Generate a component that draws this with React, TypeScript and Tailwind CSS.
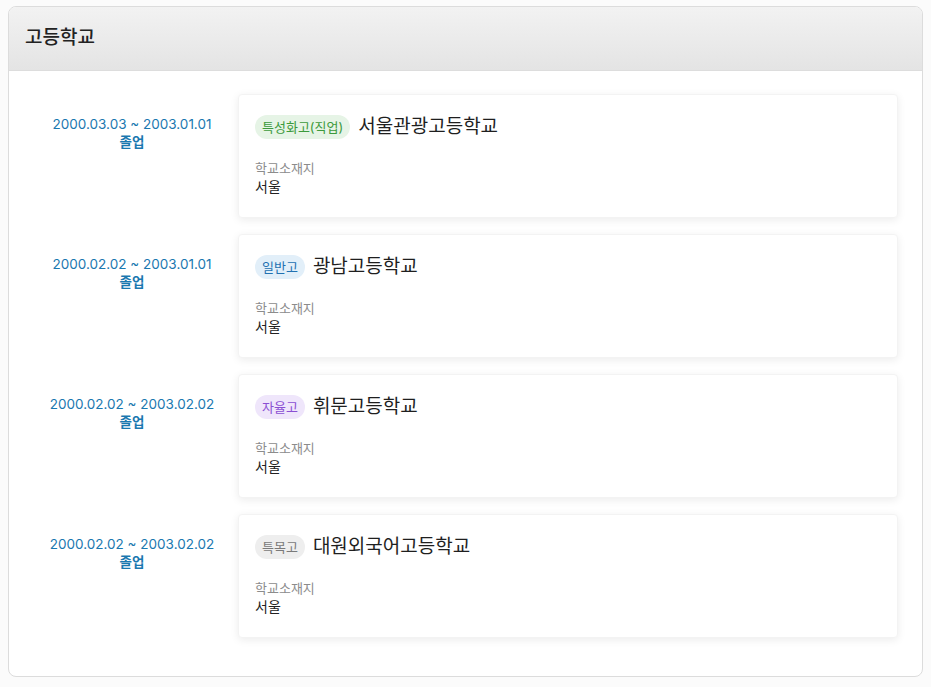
import React from "react";

type School = {
  period: string;
  status: string;
  kind: string;
  kindClass: string;
  name: string;
  location: string;
};

const SCHOOLS: School[] = [
  {
    period: "2000.03.03 ~ 2003.01.01",
    status: "졸업",
    kind: "특성화고(직업)",
    kindClass: "bg-[#e6f4e6] text-[#3c9a3c]",
    name: "서울관광고등학교",
    location: "서울",
  },
  {
    period: "2000.02.02 ~ 2003.01.01",
    status: "졸업",
    kind: "일반고",
    kindClass: "bg-[#e2eff9] text-[#2271b1]",
    name: "광남고등학교",
    location: "서울",
  },
  {
    period: "2000.02.02 ~ 2003.02.02",
    status: "졸업",
    kind: "자율고",
    kindClass: "bg-[#efe6fb] text-[#8b4fd3]",
    name: "휘문고등학교",
    location: "서울",
  },
  {
    period: "2000.02.02 ~ 2003.02.02",
    status: "졸업",
    kind: "특목고",
    kindClass: "bg-[#eeeeee] text-[#7a7a7a]",
    name: "대원외국어고등학교",
    location: "서울",
  },
];

const SchoolRow: React.FC<{ school: School }> = ({ school }) => {
  return (
    <div className="flex flex-row items-start gap-[7px]">
      <div className="flex w-[198px] shrink-0 flex-col items-center pt-[21px] text-[13.5px] leading-[18px] text-[#1a78b0]">
        <span>{school.period}</span>
        <span className="font-semibold">{school.status}</span>
      </div>
      <div className="flex flex-1 flex-col rounded-[4px] border border-[#f3f3f3] bg-white px-4 pb-5 pt-5 shadow-[0_2px_8px_rgba(0,0,0,0.08)]">
        <div className="flex flex-row items-center gap-2">
          <span
            className={`rounded-full px-[7px] text-[13px] leading-[24px] ${school.kindClass}`}
          >
            {school.kind}
          </span>
          <h3 className="text-[19px] leading-[24px] text-[#1f1f1f]">
            {school.name}
          </h3>
        </div>
        <div className="mt-5 flex flex-col">
          <span className="text-[13px] leading-[18px] text-[#8c8c8c]">
            학교소재지
          </span>
          <span className="text-[14px] leading-[20px] text-[#222]">
            {school.location}
          </span>
        </div>
      </div>
    </div>
  );
};

export default function App() {
  return (
    <div
      className="min-h-[687px] w-full bg-[#fbfbfb] px-2 pb-[10px] pt-[6px]"
      style={{ fontFamily: "Inter, 'Noto Sans CJK KR', sans-serif" }}
    >
      <div className="flex flex-col overflow-hidden rounded-[8px] border border-[#dcdcdc] bg-white">
        <div className="flex h-[64px] items-center border-b border-[#dddddd] bg-gradient-to-b from-[#f2f2f2] to-[#e4e4e4] px-4">
          <h2 className="text-[19px] font-medium text-[#222]">고등학교</h2>
        </div>
        <div className="flex flex-col gap-4 pb-[38px] pl-6 pr-6 pt-[23px]">
          {SCHOOLS.map((s, i) => (
            <SchoolRow key={i} school={s} />
          ))}
        </div>
      </div>
    </div>
  );
}
